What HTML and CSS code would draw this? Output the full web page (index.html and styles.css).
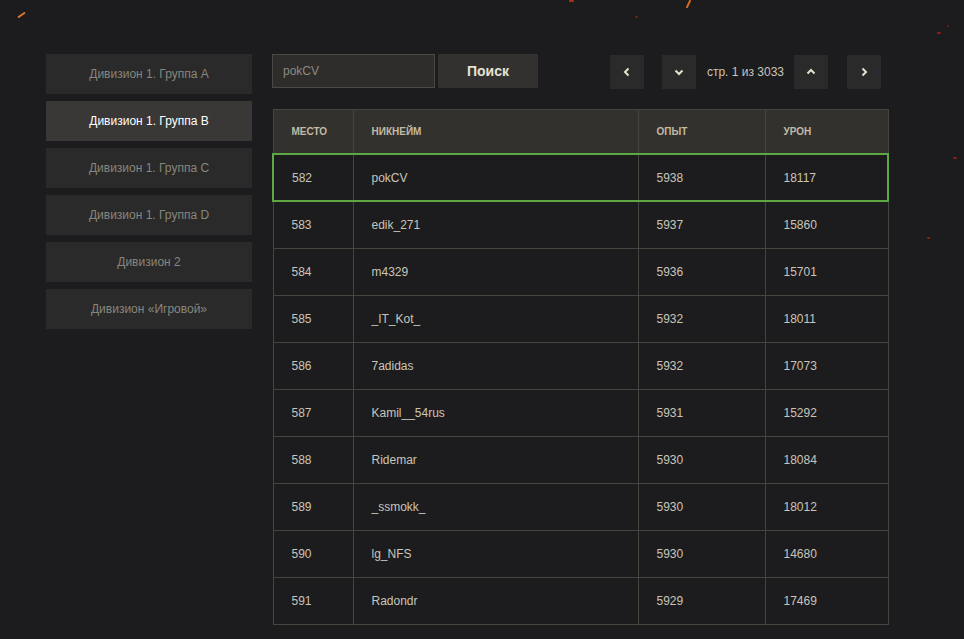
FILE: index.html
```html
<!DOCTYPE html>
<html lang="ru">
<head>
  <meta charset="UTF-8">
  <meta name="viewport" content="width=device-width, initial-scale=1.0">
  <title>Рейтинг</title>
  <link rel="stylesheet" href="styles.css">
</head>
<body>

  <div class="sparks">
    <span class="spark s1"></span>
    <span class="spark s2"></span>
    <span class="spark s3"></span>
    <span class="spark s4"></span>
    <span class="spark s5"></span>
    <span class="spark s6"></span>
    <span class="spark s7"></span>
    <span class="spark s8"></span>
  </div>

  <div class="page">
    <div class="sidebar">
      <a class="division">Дивизион 1. Группа A</a>
      <a class="division active">Дивизион 1. Группа B</a>
      <a class="division">Дивизион 1. Группа C</a>
      <a class="division">Дивизион 1. Группа D</a>
      <a class="division">Дивизион 2</a>
      <a class="division">Дивизион «Игровой»</a>
    </div>

    <div class="content">
      <div class="toolbar">
        <div class="search">
          <input type="text" class="search-input" value="pokCV">
          <button class="search-btn">Поиск</button>
        </div>
        <div class="pager">
          <button class="pager-btn">
            <svg width="10" height="10" viewBox="0 0 10 10"><path d="M6.5 1.5 3 5l3.5 3.5" fill="none" stroke="#e4e0d0" stroke-width="2"/></svg>
          </button>
          <button class="pager-btn">
            <svg width="10" height="10" viewBox="0 0 10 10"><path d="M1.5 3.5 5 7l3.5-3.5" fill="none" stroke="#e4e0d0" stroke-width="2"/></svg>
          </button>
          <span class="pager-text">стр. 1 из 3033</span>
          <button class="pager-btn">
            <svg width="10" height="10" viewBox="0 0 10 10"><path d="M1.5 6.5 5 3l3.5 3.5" fill="none" stroke="#e4e0d0" stroke-width="2"/></svg>
          </button>
          <button class="pager-btn">
            <svg width="10" height="10" viewBox="0 0 10 10"><path d="M3.5 1.5 7 5 3.5 8.5" fill="none" stroke="#e4e0d0" stroke-width="2"/></svg>
          </button>
        </div>
      </div>

      <table class="rating">
        <thead>
          <tr>
            <th class="c-place">Место</th>
            <th class="c-nick">Никнейм</th>
            <th class="c-exp">Опыт</th>
            <th class="c-dmg">Урон</th>
          </tr>
        </thead>
        <tbody>
          <tr class="me"><td>582</td><td>pokCV</td><td>5938</td><td>18117</td></tr>
          <tr><td>583</td><td>edik_271</td><td>5937</td><td>15860</td></tr>
          <tr><td>584</td><td>m4329</td><td>5936</td><td>15701</td></tr>
          <tr><td>585</td><td>_IT_Kot_</td><td>5932</td><td>18011</td></tr>
          <tr><td>586</td><td>7adidas</td><td>5932</td><td>17073</td></tr>
          <tr><td>587</td><td>Kamil__54rus</td><td>5931</td><td>15292</td></tr>
          <tr><td>588</td><td>Ridemar</td><td>5930</td><td>18084</td></tr>
          <tr><td>589</td><td>_ssmokk_</td><td>5930</td><td>18012</td></tr>
          <tr><td>590</td><td>lg_NFS</td><td>5930</td><td>14680</td></tr>
          <tr><td>591</td><td>Radondr</td><td>5929</td><td>17469</td></tr>
        </tbody>
      </table>
    </div>
  </div>

</body>
</html>
```

FILE: styles.css
```css
html, body {
  margin: 0;
  height: 100%;
  overflow: hidden;
}
body {
  background: #1c1c1e;
  font-family: "Liberation Sans", Arial, sans-serif;
  color: #c9c5b9;
}
.sparks {
  position: absolute;
  inset: 0;
  pointer-events: none;
}
.spark {
  position: absolute;
  height: 2px;
  border-radius: 1px;
  background: #c8501e;
}
.s1 { left: 17px; top: 14px; width: 9px; transform: rotate(-35deg); background: #e0782c; }
.s2 { left: 569px; top: 0; width: 5px; background: #a8301a; }
.s3 { left: 684px; top: 3px; width: 9px; transform: rotate(-65deg); background: #d86a28; }
.s4 { left: 635px; top: 16px; width: 3px; background: #6e2418; }
.s5 { left: 937px; top: 32px; width: 4px; background: #8e1e16; }
.s6 { left: 947px; top: 25px; width: 2px; background: #7a1c14; }
.s7 { left: 953px; top: 157px; width: 4px; background: #8e1e16; }
.s8 { left: 927px; top: 237px; width: 3px; background: #8e1e16; }

.page {
  display: flex;
  gap: 20px;
  padding: 54px 0 0 46px;
}
.sidebar {
  width: 206px;
  display: flex;
  flex-direction: column;
  gap: 7px;
}
.division {
  height: 40px;
  display: flex;
  align-items: center;
  justify-content: center;
  background: #2a2a2a;
  color: #87867d;
  font-size: 12px;
  cursor: pointer;
}
.division.active {
  background: #393836;
  color: #fff;
}

.content {
  width: 617px;
}
.toolbar {
  display: flex;
  justify-content: space-between;
  height: 34px;
  margin-bottom: 21px;
}
.search {
  display: flex;
  gap: 3px;
}
.search-input {
  box-sizing: border-box;
  width: 163px;
  height: 34px;
  padding: 0 10px;
  background: #2e2d2b;
  border: 1px solid #4a4946;
  color: #8d8a80;
  font-family: inherit;
  font-size: 12px;
  outline: none;
}
.search-btn {
  width: 100px;
  height: 34px;
  border: none;
  background: #32312f;
  color: #e6e2d2;
  font-family: inherit;
  font-size: 14px;
  font-weight: bold;
  cursor: pointer;
}
.pager {
  display: flex;
  align-items: center;
  margin-right: 8px;
}
.pager-btn {
  width: 34px;
  height: 34px;
  margin-top: 2px;
  border: none;
  background: #2a2a2a;
  display: flex;
  align-items: center;
  justify-content: center;
  cursor: pointer;
  padding: 0;
}
.pager-btn + .pager-btn {
  margin-left: 18px;
}
.pager-text {
  font-size: 12px;
  color: #c9c5b9;
  margin: 2px 10px 0 11px;
}
.pager-text + .pager-btn {
  margin-left: 0;
}
.pager-text + .pager-btn + .pager-btn {
  margin-left: 19px;
}

.rating {
  width: 617px;
  border-collapse: collapse;
  border: 1px solid #45443f;
  font-size: 12px;
}
.rating th {
  height: 43px;
  background: #33312e;
  color: #c2baa4;
  font-size: 10px;
  font-weight: bold;
  text-transform: uppercase;
  text-align: left;
  padding: 0 18px;
  border-left: 1px solid #45443f;
}
.rating td {
  height: 46px;
  padding: 0 18px;
  border-left: 1px solid #45443f;
  border-top: 1px solid #45443f;
}
.c-place { width: 43px; }
.c-nick { width: 248px; }
.c-exp { width: 90px; }
.rating tr.me td {
  border-top: 2px solid #5ea843;
  border-bottom: 2px solid #5ea843;
  height: 45px;
}
.rating tr.me td:first-child { border-left: 2px solid #5ea843; }
.rating tr.me td:last-child { border-right: 2px solid #5ea843; }
```
